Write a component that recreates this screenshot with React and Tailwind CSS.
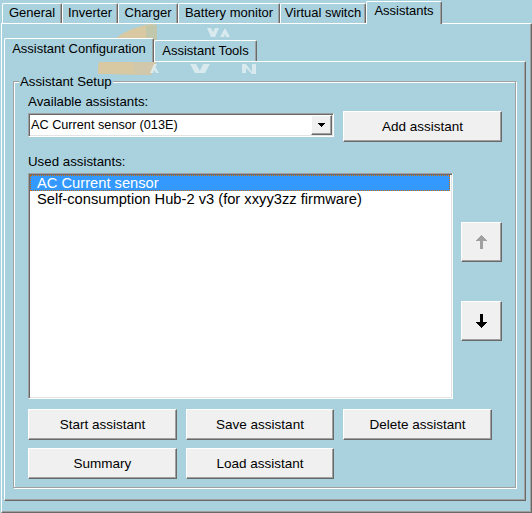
import React from 'react';

const raised =
  'bg-[#f0f0f0] border border-t-white border-l-white border-r-[#696969] border-b-[#696969] shadow-[inset_-1px_-1px_0_#a0a0a0]';
const sunken =
  'bg-white border border-t-[#a0a0a0] border-l-[#a0a0a0] border-r-white border-b-white shadow-[inset_1px_1px_0_#696969,inset_-1px_-1px_0_#e3e3e3] p-[1px]';
const tabFace =
  'bg-[#a9d1de] border-t border-l border-r border-t-white border-l-white border-r-[#696969] shadow-[inset_-1px_0_0_#a0a0a0] rounded-t-[2px] flex justify-center';

function Watermark() {
  return (
    <svg
      className="absolute left-0 top-0 -z-10 w-[532px] h-[100px] pointer-events-none"
      viewBox="0 0 532 100"
    >
      <path d="M98 74 C96 55 112 31 150 24 L157 25 L157 52 C157 63 154 70 150 75 Z" fill="#d8c9a2" />
      <path d="M146 26 L157 25 L157 40 L146 40 Z" fill="#bcc7ae" opacity="0.8" />
      <path d="M132 62 L154 62 L152 75 L135 75 Z" fill="#cfc8ae" opacity="0.8" />
      <g fill="#e6f1f4" opacity="0.8">
        <path d="M207 28 L211 28 L213 32 L215 28 L219 28 L215 37 L211 37 Z" />
        <path d="M220 37 L225 28 L230 37 L226 37 L225 34 L224 37 Z" />
        <path d="M150 73 L154 64 L157 64 L153 73 Z" />
        <path d="M156 73 L153 68 L156 68 L159 73 Z" />
        <path d="M190 64 L196 64 L201 73 L195 73 Z" />
        <path d="M203 64 L210 64 L205 73 L199 73 Z" />
        <path d="M242 64 L246 64 L246 73 L242 73 Z" />
        <path d="M246 64 L252 72 L252 64 L256 64 L256 74 L252 74 L246 68 Z" />
      </g>
    </svg>
  );
}

function OuterTab({ label, width, selected }) {
  if (selected) {
    return (
      <div className={`${tabFace} relative z-10 h-[23px] mb-[-1px] pt-[1px] ${width}`}>
        {label}
      </div>
    );
  }
  return <div className={`${tabFace} h-[20px] pt-[1px] ${width}`}>{label}</div>;
}

function UpArrow({ color }) {
  return (
    <svg width="11" height="14" viewBox="0 0 11 14" shapeRendering="crispEdges">
      <polygon points="5.5,0 11,6 0,6" fill={color} />
      <rect x="4" y="6" width="3" height="8" fill={color} />
    </svg>
  );
}

function DownArrow({ color }) {
  return (
    <svg width="11" height="14" viewBox="0 0 11 14" shapeRendering="crispEdges">
      <rect x="4" y="0" width="3" height="8" fill={color} />
      <polygon points="0,8 11,8 5.5,14" fill={color} />
    </svg>
  );
}

export default function App() {
  const buttons = ['Start assistant', 'Save assistant', 'Delete assistant', 'Summary', 'Load assistant'];

  return (
    <div className="isolate relative w-[532px] h-[513px] overflow-hidden bg-[#a9d1de] font-['Liberation_Sans',Arial,sans-serif] text-[13px] leading-[15px] text-black">
      <Watermark />

      {/* top tab strip */}
      <div className="flex items-end h-[23px] pl-[2px]">
        <OuterTab label="General" width="w-[60px]" />
        <OuterTab label="Inverter" width="w-[56px]" />
        <OuterTab label="Charger" width="w-[60px]" />
        <OuterTab label="Battery monitor" width="w-[102px]" />
        <OuterTab label="Virtual switch" width="w-[86px]" />
        <OuterTab label="Assistants" width="w-[76px]" selected />
      </div>

      {/* outer page */}
      <div className="ml-[1px] w-[531px] h-[490px] border border-t-white border-l-white border-r-[#696969] border-b-[#696969] shadow-[inset_-1px_-1px_0_#a0a0a0] pt-[14px] pl-[2px]">
        <div className="flex items-end h-[23px]">
          <div className={`${tabFace} relative z-10 w-[150px] h-[24px] mb-[-1px] pt-[2px]`}>
            Assistant Configuration
          </div>
          <div className={`${tabFace} w-[103px] h-[21px] pt-[2px]`}>Assistant Tools</div>
        </div>

        {/* inner page */}
        <div className="w-[522px] h-[440px] border border-t-white border-l-white border-r-[#696969] border-b-[#696969] shadow-[inset_-1px_-1px_0_#a0a0a0] pl-[8px] pt-[19px]">
          <div className="relative w-[503px] h-[407px] border border-[#a0a0a0] shadow-[1px_1px_0_#ffffff,inset_1px_1px_0_#ffffff] pl-[14px] pt-[12px] text-[13.3px]">
            <span className="absolute left-[5px] top-[-8px] bg-[#a9d1de] px-[1px] text-[13.2px]">Assistant Setup</span>

            <div>Available assistants:</div>
            <div className="flex items-start mt-[2px]">
              <div className={`${sunken} mt-[2px] w-[306px] h-[24px] flex items-center`}>
                <span className="flex-1 pl-[1px] text-[12.7px]">AC Current sensor (013E)</span>
                <div className={`${raised} w-[21px] h-[20px] flex items-center justify-center`}>
                  <svg width="7" height="4" viewBox="0 0 7 4" shapeRendering="crispEdges">
                    <polygon points="0,0 7,0 3.5,4" fill="#000" />
                  </svg>
                </div>
              </div>
              <button className={`${raised} ml-[9px] w-[159px] h-[31px] text-[13.5px]`}>Add assistant</button>
            </div>

            <div className="mt-[12px]">Used assistants:</div>
            <div className="flex mt-[4px]">
              <div className={`${sunken} w-[425px] h-[226px] pt-[1px] pl-[1px] text-[14.7px] leading-[14px]`}>
                <div className="w-[420px] h-[16px] bg-[#3399ff] text-white border border-dotted border-[#cc6600] pl-[6px]">
                  AC Current sensor
                </div>
                <div className="w-[420px] h-[16px] pl-[7px] pt-[1px]">Self-consumption Hub-2 v3 (for xxyy3zz firmware)</div>
              </div>
              <div className="ml-[8px] flex flex-col pt-[49px]">
                <button className={`${raised} w-[41px] h-[40px] flex items-center justify-center`}>
                  <UpArrow color="#a0a0a0" />
                </button>
                <button className={`${raised} mt-[39px] w-[41px] h-[40px] flex items-center justify-center`}>
                  <DownArrow color="#000" />
                </button>
              </div>
            </div>

            <div className="grid grid-cols-[149px_148px_149px] gap-x-[9px] gap-y-[8px] mt-[10px]">
              {buttons.map((b) => (
                <button key={b} className={`${raised} h-[31px] text-[13.5px]`}>
                  {b}
                </button>
              ))}
            </div>
          </div>
        </div>
      </div>
    </div>
  );
}
